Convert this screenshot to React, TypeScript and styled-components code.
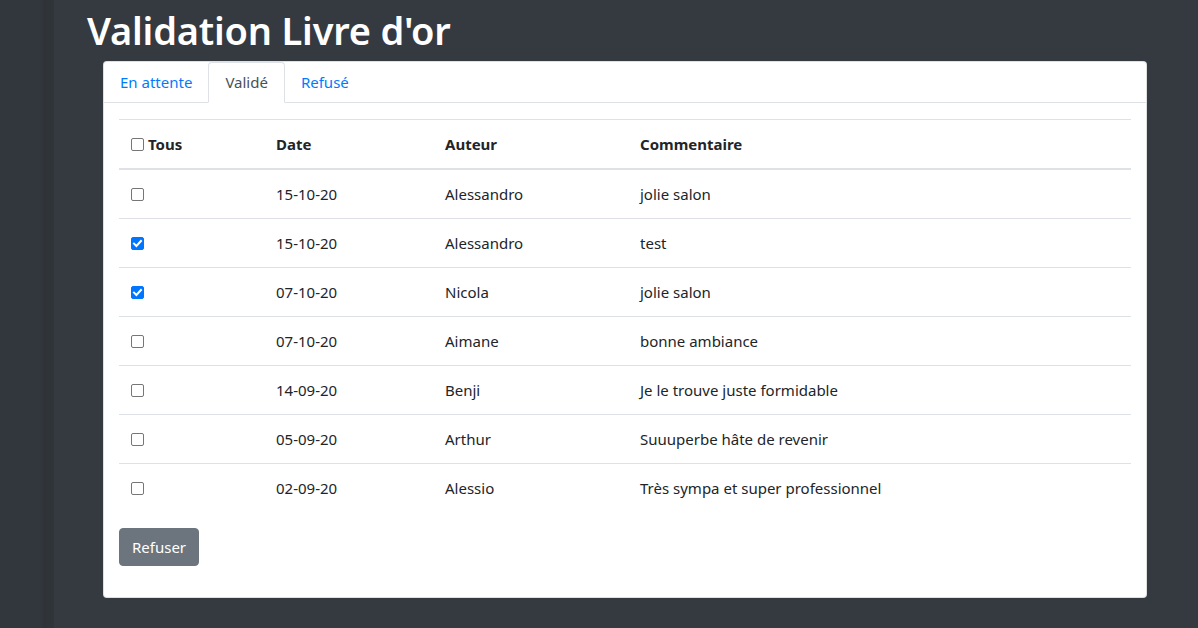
import React, { useState } from "react";
import styled, { createGlobalStyle } from "styled-components";

const Global = createGlobalStyle`
  html, body { margin: 0; padding: 0; }
  body {
    background: #343a40;
    font-family: "Noto Sans", "Open Sans", sans-serif;
    color: #212529;
    font-size: 16px;
    line-height: 1.5;
  }
  * { box-sizing: border-box; }
`;

const Layout = styled.div`
  display: flex;
  min-height: 628px;
`;

const Sidebar = styled.div`
  width: 54px;
  flex-shrink: 0;
  background: linear-gradient(to right, #32373d 0px, #32373d 40px, #2f3338 44px, #30353a 54px);
`;

const Main = styled.main`
  flex: 1;
  padding: 0 51px 0 33px;
`;

const Title = styled.h1`
  margin: 0;
  padding: 6px 0 6px 0;
  font-size: 38px;
  font-weight: 600;
  line-height: 48px;
  color: #fff;
  letter-spacing: -0.2px;
`;

const Card = styled.div`
  background: #fff;
  border-radius: 4px;
  border: 1px solid rgba(0, 0, 0, 0.125);
  margin: 1px 0 0 16px;
`;

const Tabs = styled.ul`
  display: flex;
  list-style: none;
  margin: 0;
  padding: 0;
  border-bottom: 1px solid #dee2e6;
`;

const Tab = styled.li<{ $active?: boolean }>`
  margin-bottom: -1px;
  padding: 7px ${(p) => (p.$active ? 16 : 15)}px;
  font-size: 15px;
  line-height: 25px;
  color: ${(p) => (p.$active ? "#495057" : "#007bff")};
  background: ${(p) => (p.$active ? "#fff" : "transparent")};
  border: 1px solid transparent;
  border-color: ${(p) => (p.$active ? "#dee2e6 #dee2e6 #fff" : "transparent")};
  border-top-left-radius: 4px;
  border-top-right-radius: 4px;
  cursor: pointer;
`;

const Body = styled.div`
  padding: 16px 15px 31px 15px;
`;

const Table = styled.table`
  width: 100%;
  border-collapse: collapse;
  margin-bottom: 16px;
  font-size: 15px;
`;

const Th = styled.th<{ $w?: number }>`
  width: ${(p) => (p.$w ? `${p.$w}px` : "auto")};
  text-align: left;
  padding: 12px;
  line-height: 24px;
  font-weight: 700;
  border-top: 1px solid #dee2e6;
  border-bottom: 2px solid #dee2e6;
  vertical-align: bottom;
`;

const Td = styled.td`
  padding: 12px;
  line-height: 24px;
  border-top: 1px solid #dee2e6;
  vertical-align: top;
`;

const Row = styled.tr`
  &:first-child td { border-top: none; }
`;

const Box = styled.span<{ $checked?: boolean }>`
  display: inline-block;
  width: 13px;
  height: 13px;
  border-radius: 2px;
  border: 1px solid ${(p) => (p.$checked ? "#0075ff" : "#767676")};
  background: ${(p) => (p.$checked ? "#0075ff" : "#fff")};
  vertical-align: -1px;
  margin-right: 4px;
  position: relative;
  cursor: pointer;
  svg { position: absolute; left: 0; top: 0; }
`;

const Button = styled.button`
  font-family: inherit;
  font-size: 15px;
  line-height: 24px;
  padding: 6px 12px;
  color: #fff;
  background: #6c757d;
  border: 1px solid #6c757d;
  border-radius: 4px;
  cursor: pointer;
`;

const Checkbox = ({ checked, onClick }: { checked: boolean; onClick: () => void }) => (
  <Box $checked={checked} onClick={onClick}>
    {checked && (
      <svg width="11" height="11" viewBox="0 0 11 11">
        <path d="M2 5.6 L4.4 8 L9 3" fill="none" stroke="#fff" strokeWidth="2" strokeLinecap="square" />
      </svg>
    )}
  </Box>
);

const data = [
  { d: "15-10-20", a: "Alessandro", c: "jolie salon", ck: false },
  { d: "15-10-20", a: "Alessandro", c: "test", ck: true },
  { d: "07-10-20", a: "Nicola", c: "jolie salon", ck: true },
  { d: "07-10-20", a: "Aimane", c: "bonne ambiance", ck: false },
  { d: "14-09-20", a: "Benji", c: "Je le trouve juste formidable", ck: false },
  { d: "05-09-20", a: "Arthur", c: "Suuuperbe hâte de revenir", ck: false },
  { d: "02-09-20", a: "Alessio", c: "Très sympa et super professionnel", ck: false },
];

export default function App() {
  const [checks, setChecks] = useState(data.map((r) => r.ck));
  const [all, setAll] = useState(false);
  const [tab, setTab] = useState(1);
  const tabs = ["En attente", "Validé", "Refusé"];
  return (
    <>
      <Global />
      <Layout>
        <Sidebar />
        <Main>
          <Title>Validation Livre d'or</Title>
          <Card>
            <Tabs>
              {tabs.map((t, i) => (
                <Tab key={t} $active={tab === i} onClick={() => setTab(i)}>
                  {t}
                </Tab>
              ))}
            </Tabs>
            <Body>
              <Table>
                <thead>
                  <tr>
                    <Th $w={145}>
                      <Checkbox
                        checked={all}
                        onClick={() => {
                          setAll(!all);
                          setChecks(checks.map(() => !all));
                        }}
                      />
                      Tous
                    </Th>
                    <Th $w={169}>Date</Th>
                    <Th $w={195}>Auteur</Th>
                    <Th>Commentaire</Th>
                  </tr>
                </thead>
                <tbody>
                  {data.map((r, i) => (
                    <Row key={i}>
                      <Td>
                        <Checkbox
                          checked={checks[i]}
                          onClick={() => setChecks(checks.map((c, j) => (j === i ? !c : c)))}
                        />
                      </Td>
                      <Td>{r.d}</Td>
                      <Td>{r.a}</Td>
                      <Td>{r.c}</Td>
                    </Row>
                  ))}
                </tbody>
              </Table>
              <Button>Refuser</Button>
            </Body>
          </Card>
        </Main>
      </Layout>
    </>
  );
}
